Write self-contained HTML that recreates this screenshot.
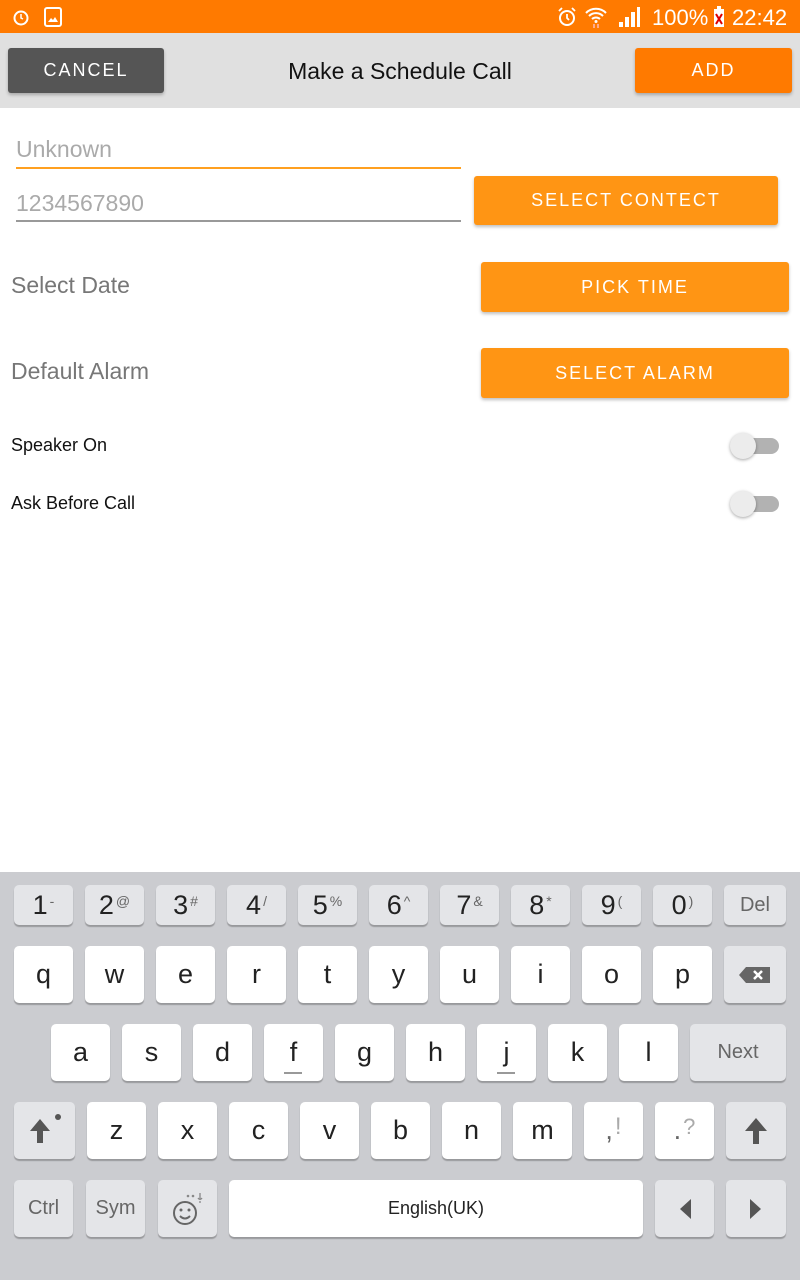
<!DOCTYPE html><html><head><meta charset="utf-8"><style>
*{margin:0;padding:0;box-sizing:border-box}
body{width:800px;height:1280px;position:relative;background:#fff;font-family:"Liberation Sans",sans-serif;overflow:hidden}
.a{position:absolute}
.btn{position:absolute;color:#fff;font-size:18px;letter-spacing:2px;display:flex;align-items:center;justify-content:center;border-radius:3px;box-shadow:0 2px 3px rgba(0,0,0,.25)}
.k{position:absolute;background:#fff;border-radius:5px;box-shadow:0 2px 1px rgba(0,0,0,.25);display:flex;align-items:center;justify-content:center;font-size:27px;color:#222}
.g{background:#e4e5e8}
.sw{position:absolute;left:730px;width:50px;height:28px}
.sw .t{position:absolute;left:4px;top:6px;width:45px;height:16px;border-radius:8px;background:#b2b2b2}
.sw .c{position:absolute;left:0;top:1px;width:26px;height:26px;border-radius:50%;background:#ececec;box-shadow:0 1px 3px rgba(0,0,0,.35)}
sup{font-size:14px;color:#666;position:relative;top:-4px;margin-left:2px}
</style></head><body>
<div class="a" style="left:0;top:0;width:800px;height:33px;background:#ff7a00"></div>
<svg class="a" style="left:11px;top:7px" width="20" height="20" viewBox="0 0 20 20"><circle cx="10" cy="11" r="6.5" fill="none" stroke="#fff" stroke-width="2"/><path d="M10 7v4l2 1" stroke="#fff" stroke-width="1.5" fill="none"/></svg>
<svg class="a" style="left:44px;top:7px" width="18" height="20" viewBox="0 0 18 20"><rect x="1" y="1" width="16" height="18" rx="2" fill="none" stroke="#fff" stroke-width="2"/><path d="M4 15l3-4 2 2 2-3 3 5z" fill="#fff"/></svg>
<svg class="a" style="left:556px;top:6px" width="22" height="22" viewBox="0 0 22 22"><circle cx="11" cy="12" r="7" fill="none" stroke="#fff" stroke-width="2"/><path d="M11 8v4l2 2M3 5l3-3M19 5l-3-3" stroke="#fff" stroke-width="1.8" fill="none"/></svg>
<svg class="a" style="left:584px;top:5px" width="24" height="24" viewBox="0 0 24 24"><path d="M2 8a14 14 0 0 1 20 0M5 11a10 10 0 0 1 14 0M8 14a6 6 0 0 1 8 0" stroke="#fff" stroke-width="2" fill="none"/><circle cx="12" cy="16.5" r="1.5" fill="#fff"/><path d="M10 19v4M14 19v4" stroke="#fbb" stroke-width="1.5"/></svg>
<svg class="a" style="left:617px;top:7px" width="24" height="20" viewBox="0 0 24 20"><path d="M2 20h4v-5H2zM8 20h4v-10H8zM14 20h4V5h-4zM20 20h3V0h-3z" fill="#fff"/></svg>
<div class="a" style="left:652px;top:5px;color:#fff;font-size:22px">100%</div>
<svg class="a" style="left:713px;top:6px" width="12" height="22" viewBox="0 0 12 22"><rect x="1" y="3" width="10" height="18" fill="#fff"/><rect x="4" y="0" width="4" height="3" fill="#fff"/><path d="M3 8l6 10M9 8l-6 10" stroke="#d00" stroke-width="2"/></svg>
<div class="a" style="left:732px;top:5px;color:#fff;font-size:22px">22:42</div>
<div class="a" style="left:0;top:33px;width:800px;height:75px;background:#e0e0e0"></div>
<div class="btn" style="left:8px;top:48px;width:156px;height:45px;background:#555">CANCEL</div>
<div class="a" style="left:200px;top:58px;width:400px;text-align:center;font-size:23px;color:#111">Make a Schedule Call</div>
<div class="btn" style="left:635px;top:48px;width:157px;height:45px;background:#ff7a00">ADD</div>
<div class="a" style="left:16px;top:136px;font-size:23px;color:#aaa">Unknown</div>
<div class="a" style="left:16px;top:167px;width:445px;height:2px;background:#ffa020"></div>
<div class="a" style="left:16px;top:190px;font-size:23px;color:#aaa">1234567890</div>
<div class="a" style="left:16px;top:220px;width:445px;height:2px;background:#999"></div>
<div class="btn" style="left:474px;top:176px;width:304px;height:49px;background:#ff9514">SELECT CONTECT</div>
<div class="a" style="left:11px;top:272px;font-size:23px;color:#777">Select Date</div>
<div class="btn" style="left:481px;top:262px;width:308px;height:50px;background:#ff9514">PICK TIME</div>
<div class="a" style="left:11px;top:358px;font-size:23px;color:#777">Default Alarm</div>
<div class="btn" style="left:481px;top:348px;width:308px;height:50px;background:#ff9514">SELECT ALARM</div>
<div class="a" style="left:11px;top:435px;font-size:18px;color:#111">Speaker On</div>
<div class="sw" style="top:432px"><div class="t"></div><div class="c"></div></div>
<div class="a" style="left:11px;top:493px;font-size:18px;color:#111">Ask Before Call</div>
<div class="sw" style="top:490px"><div class="t"></div><div class="c"></div></div>
<div class="a" style="left:0;top:872px;width:800px;height:408px;background:#cbccd0"></div>
<div class="k g" style="left:14px;top:885px;width:59px;height:40px">1<sup>-</sup></div>
<div class="k g" style="left:85px;top:885px;width:59px;height:40px">2<sup>@</sup></div>
<div class="k g" style="left:156px;top:885px;width:59px;height:40px">3<sup>#</sup></div>
<div class="k g" style="left:227px;top:885px;width:59px;height:40px">4<sup>/</sup></div>
<div class="k g" style="left:298px;top:885px;width:59px;height:40px">5<sup>%</sup></div>
<div class="k g" style="left:369px;top:885px;width:59px;height:40px">6<sup>^</sup></div>
<div class="k g" style="left:440px;top:885px;width:59px;height:40px">7<sup>&amp;</sup></div>
<div class="k g" style="left:511px;top:885px;width:59px;height:40px">8<sup>*</sup></div>
<div class="k g" style="left:582px;top:885px;width:59px;height:40px">9<sup>(</sup></div>
<div class="k g" style="left:653px;top:885px;width:59px;height:40px">0<sup>)</sup></div>
<div class="k g" style="left:724px;top:885px;width:62px;height:40px;font-size:20px;color:#666">Del</div>
<div class="k" style="left:14px;top:946px;width:59px;height:57px">q</div>
<div class="k" style="left:85px;top:946px;width:59px;height:57px">w</div>
<div class="k" style="left:156px;top:946px;width:59px;height:57px">e</div>
<div class="k" style="left:227px;top:946px;width:59px;height:57px">r</div>
<div class="k" style="left:298px;top:946px;width:59px;height:57px">t</div>
<div class="k" style="left:369px;top:946px;width:59px;height:57px">y</div>
<div class="k" style="left:440px;top:946px;width:59px;height:57px">u</div>
<div class="k" style="left:511px;top:946px;width:59px;height:57px">i</div>
<div class="k" style="left:582px;top:946px;width:59px;height:57px">o</div>
<div class="k" style="left:653px;top:946px;width:59px;height:57px">p</div>
<div class="k g" style="left:724px;top:946px;width:62px;height:57px"><svg width="34" height="20" viewBox="0 0 34 20"><path d="M8 2h24v16H8L1 10z" fill="#666"/><path d="M16 6l8 8M24 6l-8 8" stroke="#fff" stroke-width="2.5"/></svg></div>
<div class="k" style="left:51px;top:1024px;width:59px;height:57px">a</div>
<div class="k" style="left:122px;top:1024px;width:59px;height:57px">s</div>
<div class="k" style="left:193px;top:1024px;width:59px;height:57px">d</div>
<div class="k" style="left:264px;top:1024px;width:59px;height:57px">f<div class="a" style="left:20px;top:48px;width:18px;height:2px;background:#999"></div></div>
<div class="k" style="left:335px;top:1024px;width:59px;height:57px">g</div>
<div class="k" style="left:406px;top:1024px;width:59px;height:57px">h</div>
<div class="k" style="left:477px;top:1024px;width:59px;height:57px">j<div class="a" style="left:20px;top:48px;width:18px;height:2px;background:#999"></div></div>
<div class="k" style="left:548px;top:1024px;width:59px;height:57px">k</div>
<div class="k" style="left:619px;top:1024px;width:59px;height:57px">l</div>
<div class="k g" style="left:690px;top:1024px;width:96px;height:57px;font-size:20px;color:#666">Next</div>
<div class="k g" style="left:14px;top:1102px;width:61px;height:57px"><svg width="40" height="40" viewBox="0 0 40 40"><path d="M15 8L5 20h7v12h6V20h7z" fill="#555"/><circle cx="33" cy="6" r="3" fill="#555"/></svg></div>
<div class="k" style="left:87px;top:1102px;width:59px;height:57px">z</div>
<div class="k" style="left:158px;top:1102px;width:59px;height:57px">x</div>
<div class="k" style="left:229px;top:1102px;width:59px;height:57px">c</div>
<div class="k" style="left:300px;top:1102px;width:59px;height:57px">v</div>
<div class="k" style="left:371px;top:1102px;width:59px;height:57px">b</div>
<div class="k" style="left:442px;top:1102px;width:59px;height:57px">n</div>
<div class="k" style="left:513px;top:1102px;width:59px;height:57px">m</div>
<div class="k" style="left:584px;top:1102px;width:59px;height:57px;color:#666">,<sup style="font-size:24px;color:#aaa">!</sup></div>
<div class="k" style="left:655px;top:1102px;width:59px;height:57px;color:#666">.<sup style="font-size:22px;color:#aaa">?</sup></div>
<div class="k g" style="left:726px;top:1102px;width:60px;height:57px"><svg width="26" height="30" viewBox="0 0 26 30"><path d="M13 2L2 15h8v13h6V15h8z" fill="#555"/></svg></div>
<div class="k g" style="left:14px;top:1180px;width:59px;height:57px;font-size:20px;color:#666">Ctrl</div>
<div class="k g" style="left:86px;top:1180px;width:59px;height:57px;font-size:20px;color:#666">Sym</div>
<div class="k g" style="left:158px;top:1180px;width:59px;height:57px"><svg width="40" height="40" viewBox="0 0 40 40"><circle cx="17" cy="24" r="11" fill="none" stroke="#666" stroke-width="2"/><circle cx="13" cy="21" r="1.5" fill="#666"/><circle cx="21" cy="21" r="1.5" fill="#666"/><path d="M12 27q5 5 10 0" stroke="#666" stroke-width="2" fill="none"/><circle cx="20" cy="7" r="1.3" fill="#888"/><circle cx="25" cy="7" r="1.3" fill="#888"/><path d="M32 4v6M30 9q2 3 4 0M32 12v2" stroke="#888" stroke-width="1.3" fill="none"/></svg></div>
<div class="k" style="left:229px;top:1180px;width:414px;height:57px;font-size:18px">English(UK)</div>
<div class="k g" style="left:655px;top:1180px;width:59px;height:57px"><svg width="16" height="24"><path d="M14 2L3 12l11 10z" fill="#555"/></svg></div>
<div class="k g" style="left:726px;top:1180px;width:60px;height:57px"><svg width="16" height="24"><path d="M2 2l11 10L2 22z" fill="#555"/></svg></div>
</body></html>
